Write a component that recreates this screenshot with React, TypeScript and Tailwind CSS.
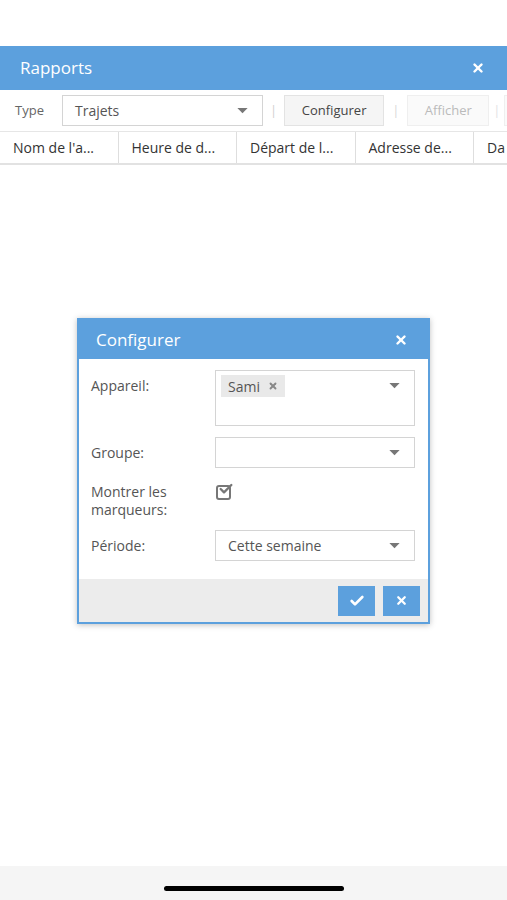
import { Check, X } from "lucide-react";

function Caret() {
  return (
    <svg width="11" height="6" viewBox="0 0 12 7" className="shrink-0">
      <path d="M0 0h12L6 6z" fill="#777" />
    </svg>
  );
}

function CloseIcon({ size = 14 }: { size?: number }) {
  return <X size={size} strokeWidth={4.2} color="#fff" />;
}

function SelectBox({ value, className = "" }: { value?: string; className?: string }) {
  return (
    <div className={`flex h-[31px] shrink-0 items-center justify-between border border-[#d4d4d4] bg-white pl-[12px] pr-[14px] text-[14px] text-[#555] ${className}`}>
      <span>{value}</span>
      <Caret />
    </div>
  );
}

const columns = ["Nom de l'a...", "Heure de d...", "Départ de l...", "Adresse de...", "Da"];

export default function App() {
  return (
    <div className="relative h-[900px] w-[507px] overflow-hidden bg-white font-['Open_Sans',sans-serif]">
      <div className="h-[46px]" />
      <div className="flex h-[44px] items-center justify-between bg-[#5ca0dd] pl-[20px] pr-[22px]">
        <span className="text-[17px] text-white">Rapports</span>
        <CloseIcon />
      </div>

      <div className="flex h-[42px] items-center overflow-hidden border-b border-[#e6e6e6] pl-[15px] text-[13px] text-[#666]">
        <span className="w-[47px] shrink-0">Type</span>
        <SelectBox value="Trajets" className="w-[201px]" />
        <span className="mx-[7px] shrink-0 text-[#d0d0d0]">|</span>
        <div className="flex h-[31px] w-[100px] shrink-0 items-center justify-center border border-[#e3e3e3] bg-[#f5f5f5] text-[13px] text-[#444]">
          Configurer
        </div>
        <span className="mx-[8px] shrink-0 text-[#d8d8d8]">|</span>
        <div className="flex h-[31px] w-[82px] shrink-0 items-center justify-center border border-[#efefef] bg-[#fafafa] text-[13px] text-[#bbb]">
          Afficher
        </div>
        <span className="mx-[4px] shrink-0 text-[#e3e3e3]">|</span>
        <div className="h-[31px] w-[20px] shrink-0 border border-[#efefef] bg-[#fafafa]" />
      </div>

      <div className="flex h-[33px] border-b-2 border-[#e2e2e2] text-[14px] text-[#333]">
        {columns.map((c, i) => (
          <div
            key={i}
            className="flex w-[118.5px] shrink-0 items-center whitespace-nowrap border-r border-[#dedede] pl-[13px]"
          >
            {c}
          </div>
        ))}
      </div>

      <div className="absolute left-[77px] top-[318px] w-[353px] border-2 border-[#5ca0dd] bg-white shadow-[0_1px_6px_rgba(0,0,0,0.25)]">
        <div className="flex h-[39px] items-center justify-between bg-[#5ca0dd] pl-[17px] pr-[20px]">
          <span className="text-[17px] text-white">Configurer</span>
          <CloseIcon />
        </div>
        <div className="grid grid-cols-[124px_200px] gap-y-[11px] pb-[18px] pl-[12px] pt-[11px] text-[14px] text-[#555]">
          <span className="pt-[5px]">Appareil:</span>
          <div className="flex h-[56px] items-start justify-between border border-[#d4d4d4] pl-[5px] pr-[14px] pt-[4px]">
            <div className="flex h-[22px] items-center gap-[8px] bg-[#e9e9e9] px-[7px] text-[14px] text-[#555]">
              Sami
              <X size={10} strokeWidth={4.5} color="#888" />
            </div>
            <div className="pt-[8px]">
              <Caret />
            </div>
          </div>

          <span className="flex items-center">Groupe:</span>
          <SelectBox />

          <span className="pt-[4px] leading-[18px]">
            Montrer les
            <br />
            marqueurs:
          </span>
          <div className="pl-[1px] pt-[6px]">
            <div className="relative h-[15px] w-[15px] rounded-[3px] border-2 border-[#777]">
              <Check size={16} strokeWidth={3.5} color="#777" className="absolute -top-[6px] left-[0px]" />
            </div>
          </div>

          <span className="flex items-center">Période:</span>
          <SelectBox value="Cette semaine" />
        </div>
        <div className="flex h-[43px] items-center justify-end gap-[8px] bg-[#ececec] pr-[8px]">
          <div className="flex h-[30px] w-[37px] items-center justify-center bg-[#5ca0dd]">
            <Check size={16} strokeWidth={4} color="#fff" />
          </div>
          <div className="flex h-[30px] w-[37px] items-center justify-center bg-[#5ca0dd]">
            <X size={13} strokeWidth={4.2} color="#fff" />
          </div>
        </div>
      </div>

      <div className="absolute bottom-0 left-0 flex h-[34px] w-full items-start justify-center bg-[#f5f5f5] pt-[20px]">
        <div className="h-[5px] w-[180px] rounded-full bg-black" />
      </div>
    </div>
  );
}
